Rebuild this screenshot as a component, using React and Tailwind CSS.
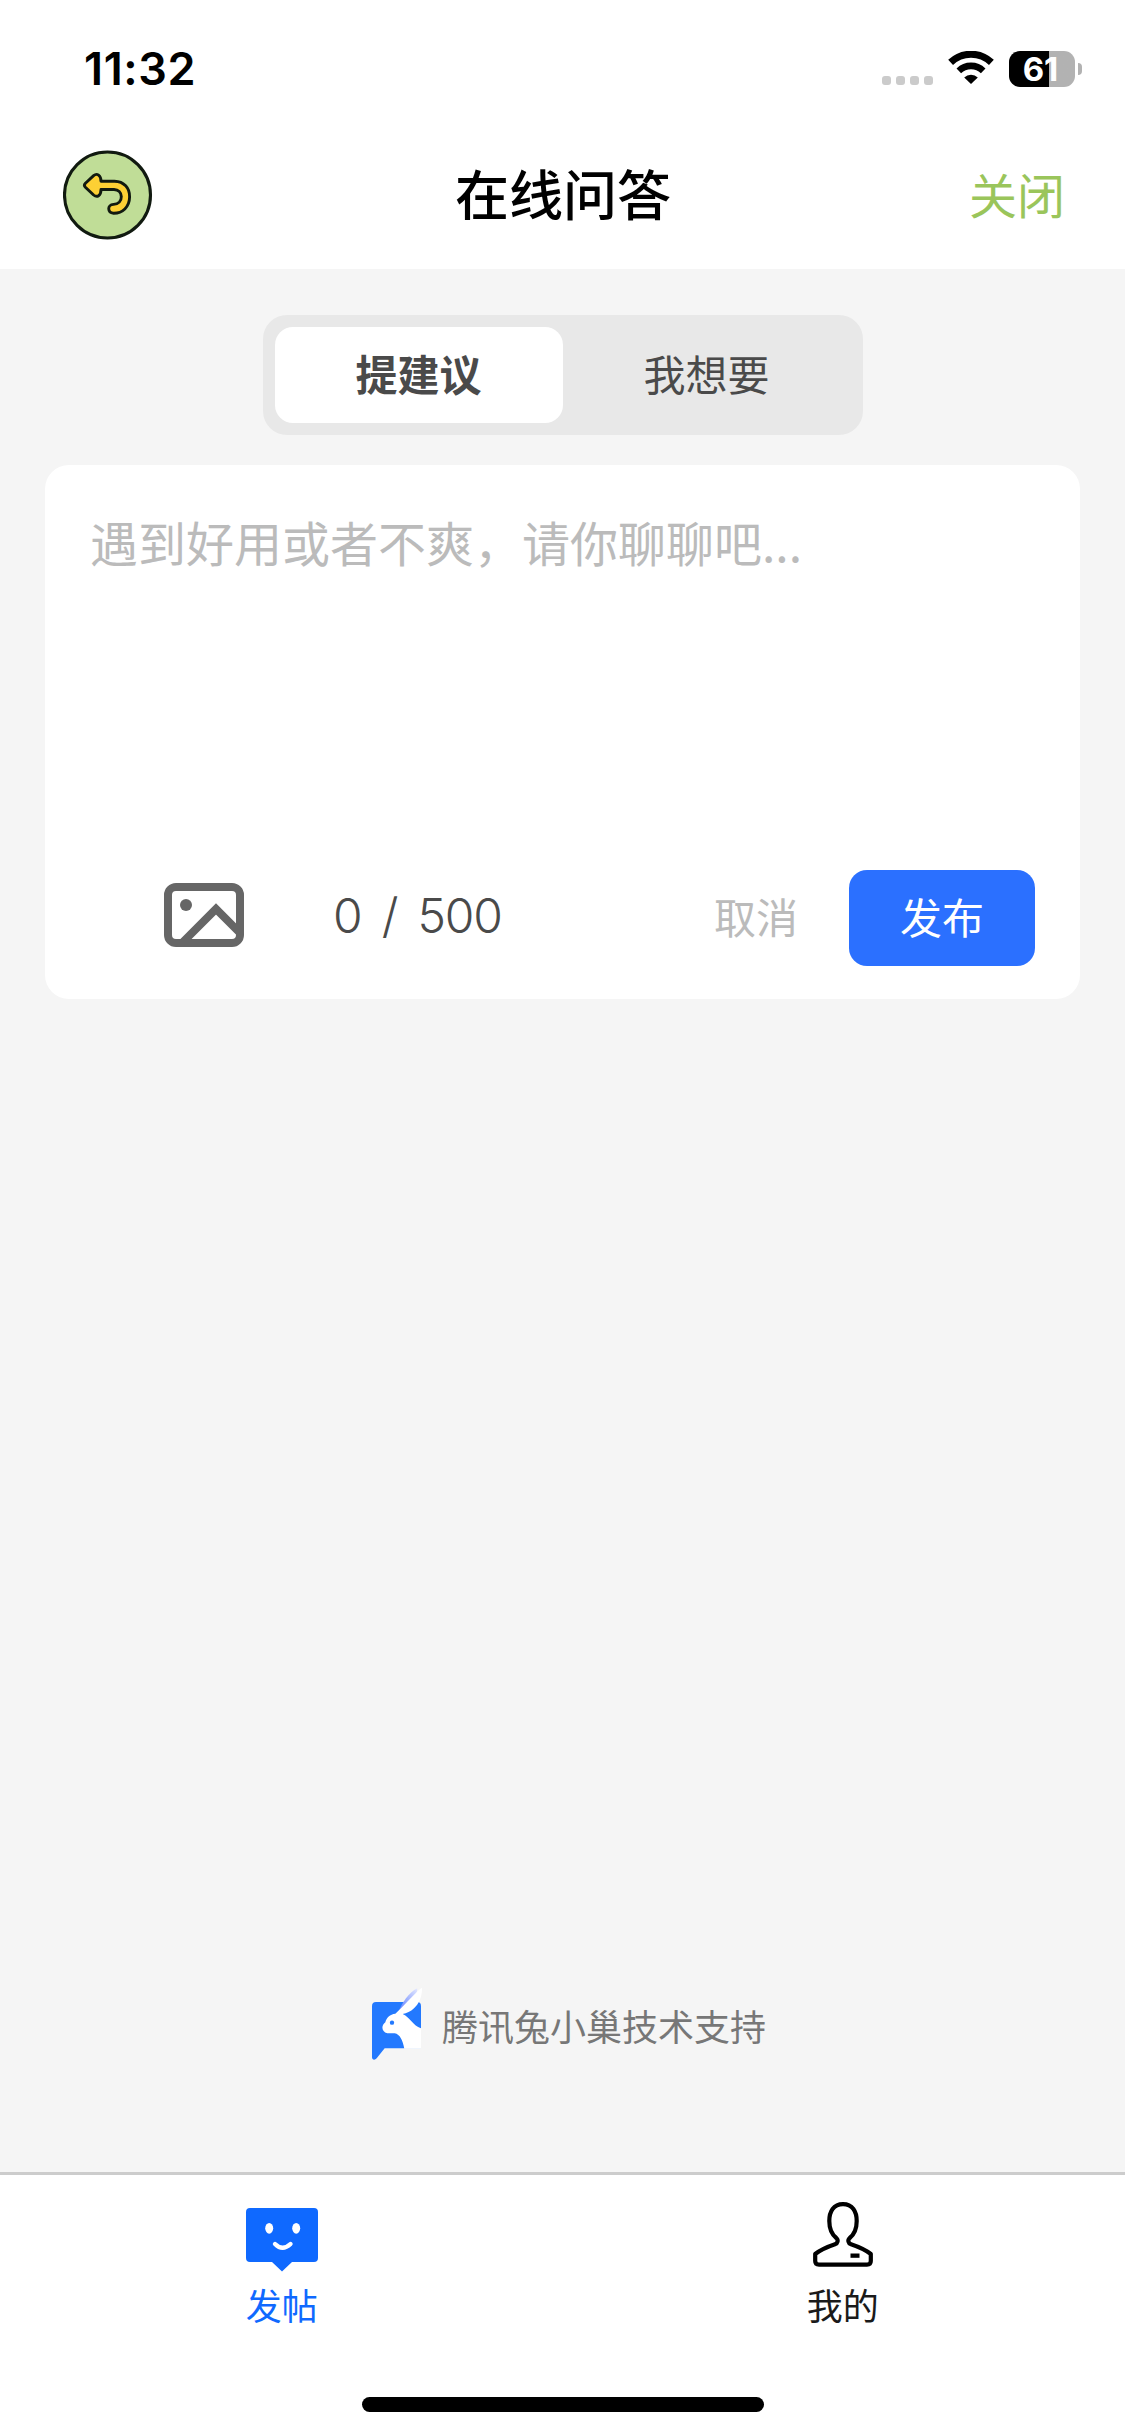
import React, { useState } from "react";

const MAX_LENGTH = 500;

const TABS = [
  { id: "suggest", label: "提建议" },
  { id: "want", label: "我想要" },
];

const WifiIcon = () => (
  <svg className="w-[46px] h-[34px]" viewBox="0 0 46 34" fill="none">
    <path d="M2.6 11.4 A29.5 29.5 0 0 1 43.4 11.4" stroke="#000" strokeWidth="7" />
    <path d="M10.8 19.8 A17.6 17.6 0 0 1 35.2 19.8" stroke="#000" strokeWidth="6.6" />
    <path d="M23 33 L16.2 26.4 A9.8 9.8 0 0 1 29.8 26.4 Z" fill="#000" />
  </svg>
);

const BackIcon = () => (
  <svg className="w-[90px] h-[90px]" viewBox="0 0 90 90" fill="none">
    <circle cx="44.5" cy="45" r="43" fill="#c0dd97" stroke="#111a10" strokeWidth="3.1" />
    <path
      d="M22.4 33.2 L30.6 25.6 C34 22.8 38 25.2 38 31.2 L51.5 31.2 C61 31.4 66.8 38 66.6 47 C66.4 57 59.5 63.4 50.5 63.2 C44.5 62.8 43.8 54.8 50.5 54.4 C55.5 54.2 58.4 51 58.3 46.6 C58.2 42.4 55.4 39.6 51 39.5 L38 39.5 C38 46 34 47.8 30.6 45 L22.4 37.2 Q20.4 35.2 22.4 33.2 Z"
      fill="#fdd034"
      stroke="#111a10"
      strokeWidth="2.9"
      strokeLinejoin="round"
    />
  </svg>
);

const PictureIcon = () => (
  <svg className="w-20 h-16" viewBox="0 0 80 64" fill="none">
    <rect x="4" y="4" width="72" height="56" rx="8" stroke="#666" strokeWidth="8" />
    <circle cx="22" cy="22" r="6" fill="#666" />
    <path d="M18 60 L52 26 L76 50" stroke="#666" strokeWidth="8" />
  </svg>
);

const RabbitLogo = () => (
  <svg className="w-[50px] h-[74px]" viewBox="0 0 150 222">
    <defs>
      <linearGradient id="ear" x1="0" y1="1" x2="1" y2="0">
        <stop offset="0" stopColor="#5c7dff" />
        <stop offset="1" stopColor="#e4e8ff" />
      </linearGradient>
    </defs>
    <path
      d="M12 45 H136 Q147 45 147 57 V184 H38 L14 214 C8 221 0 218 0 211 V57 Q0 45 12 45 Z"
      fill="#2379fe"
    />
    <path d="M80 72 C90 50 110 16 136 4 L134 20 L96 62 Z" fill="url(#ear)" />
    <path
      d="M150 2 C134 12 112 40 70 80 C54 82 43 92 40 106 C27 116 28 134 46 139 H68 C84 142 92 160 97 185 H147 V124 C122 116 116 92 92 81 C104 79 116 74 126 64 C142 50 151 26 150 2 Z"
      fill="#fff"
    />
    <circle cx="60" cy="107" r="6.5" fill="#2379fe" />
  </svg>
);

const PostIcon = () => (
  <svg className="w-[72px] h-16" viewBox="0 0 72 64" fill="none">
    <path
      d="M4 0 H68 Q72 0 72 4 V50 Q72 54 68 54 H46 L36 63.5 L26 54 H4 Q0 54 0 50 V4 Q0 0 4 0 Z"
      fill="#0f69ff"
    />
    <ellipse cx="23.2" cy="20.3" rx="4" ry="5.4" fill="#fff" />
    <ellipse cx="50.2" cy="20.3" rx="4" ry="5.4" fill="#fff" />
    <path d="M29 36 Q36.5 43.5 44.5 36" stroke="#fff" strokeWidth="4.4" strokeLinecap="round" />
  </svg>
);

const UserIcon = () => (
  <svg className="w-[60px] h-[66px]" viewBox="0 0 60 66" fill="none">
    <path
      d="M30 2.2 C20.5 2.2 16.3 9.5 16.3 19 C16.3 27.5 19 32.5 23.3 36 C25.6 38 24.8 41.4 22 42.3 C14 45 7.5 48 2.2 52 V59 Q2.2 62.6 6 62.6 H54 Q57.8 62.6 57.8 59 V52 C52.5 48 46 45 38 42.3 C35.2 41.4 34.4 38 36.7 36 C41 32.5 43.7 27.5 43.7 19 C43.7 9.5 39.5 2.2 30 2.2 Z"
      stroke="#000"
      strokeWidth="4.2"
      strokeLinejoin="round"
    />
    <rect x="37.5" y="51.5" width="9" height="4.3" fill="#000" />
  </svg>
);

const StatusBar = () => (
  <div className="h-[120px] pt-[42px] pl-[84px] pr-[43px] flex items-start justify-between">
    <span className="font-['Inter',sans-serif] text-[45px] leading-[54px] font-semibold tracking-[0.6px] text-black">
      11:32
    </span>
    <div className="flex items-start pt-[9px]">
      <div className="flex gap-[5px] mt-[25px]">
        {[0, 1, 2, 3].map((dot) => (
          <span key={dot} className="w-[9px] h-[9px] rounded-[3px] bg-[#cbcbcb]" />
        ))}
      </div>
      <div className="ml-[15px]">
        <WifiIcon />
      </div>
      <div className="ml-[15px] flex items-center">
        <div className="w-[66px] h-9 rounded-[11px] bg-linear-to-r from-black from-61% to-[#b2b2b2] to-61% flex items-center justify-center">
          <span className="pr-[3px] font-['Inter',sans-serif] text-[33px] leading-9 font-bold text-white">
            61
          </span>
        </div>
        <span className="ml-[3px] w-1 h-3 rounded-r-full bg-[#b2b2b2]" />
      </div>
    </div>
  </div>
);

const Header = () => (
  <div className="h-[149px] pl-[63px] pr-[60px] flex items-center justify-between">
    <button className="w-[94px]">
      <BackIcon />
    </button>
    <h1 className="pb-[3px] text-[54px] leading-[78px] font-medium text-black">在线问答</h1>
    <button className="pb-[3px] text-5xl leading-[72px] text-[#9ac55b]">关闭</button>
  </div>
);

const App = () => {
  const [activeTab, setActiveTab] = useState("suggest");
  const [content, setContent] = useState("");

  return (
    <div className="w-[1125px] h-[2436px] flex flex-col bg-[#f5f5f5] overflow-hidden font-['Noto_Sans_CJK_SC',sans-serif]">
      <header className="bg-white">
        <StatusBar />
        <Header />
      </header>

      <main className="flex-1 flex flex-col px-[45px] pt-[46px]">
        {/* Tabs */}
        <div className="w-[600px] h-[120px] p-3 mx-auto flex rounded-3xl bg-[#e8e8e8]">
          {TABS.map((tab) => (
            <button
              key={tab.id}
              onClick={() => setActiveTab(tab.id)}
              className={`flex-1 pb-[5px] rounded-[18px] text-[42px] leading-[60px] text-[#4a4a4a] ${
                activeTab === tab.id ? "bg-white font-bold" : "font-normal"
              }`}
            >
              {tab.label}
            </button>
          ))}
        </div>

        {/* Editor */}
        <div className="mt-[30px] h-[534px] rounded-3xl bg-white flex flex-col">
          <textarea
            className="block flex-1 resize-none outline-none px-[45px] pt-10 text-5xl leading-[72px] text-[#4a4a4a] placeholder:text-[#bbb]"
            placeholder="遇到好用或者不爽，请你聊聊吧..."
            maxLength={MAX_LENGTH}
            value={content}
            onChange={(e) => setContent(e.target.value)}
          />
          <div className="mb-[33px] h-24 pl-[119px] pr-[45px] flex items-center">
            <div className="pb-1.5">
              <PictureIcon />
            </div>
            <span className="ml-[89px] pb-[5px] font-['Inter',sans-serif] text-5xl font-light tracking-[-1.2px] [word-spacing:8px] text-[#4a4a4a]">
              {content.length} / {MAX_LENGTH}
            </span>
            <button className="ml-auto pb-[4px] text-[42px] leading-[60px] text-[#bbb]">取消</button>
            <button className="ml-[51px] pb-[4px] w-[186px] h-24 rounded-[18px] bg-[#2b70ff] text-[42px] leading-[60px] text-white">
              发布
            </button>
          </div>
        </div>

        <div className="mt-auto mb-[111px] pl-[13px] flex items-end justify-center">
          <RabbitLogo />
          <span className="ml-5 mb-[10px] text-4xl leading-[52px] text-[#777]">
            腾讯兔小巢技术支持
          </span>
        </div>
      </main>

      {/* Bottom navigation */}
      <footer className="h-[264px] border-t-[3px] border-[#ccc] bg-white flex flex-col justify-between">
        <nav className="grid grid-cols-2">
          <button className="pt-[33px] pl-px flex flex-col items-center text-4xl leading-[52px] text-[#0f69ff]">
            <PostIcon />
            <span className="mt-1.5">发帖</span>
          </button>
          <button className="pt-[27px] pr-[2px] flex flex-col items-center text-4xl leading-[52px] text-[#1a1a1a]">
            <UserIcon />
            <span className="mt-2.5">我的</span>
          </button>
        </nav>
        <div className="mx-auto mb-6 w-[402px] h-[15px] rounded-full bg-black" />
      </footer>
    </div>
  );
};

export default App;
